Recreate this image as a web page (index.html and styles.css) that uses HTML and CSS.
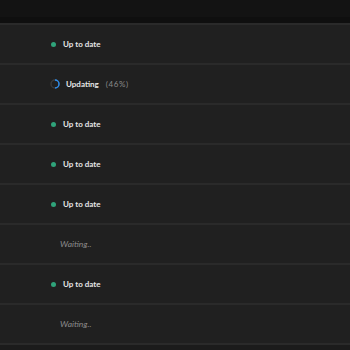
FILE: index.html
```html
<!DOCTYPE html>
<html lang="en">
<head>
  <meta charset="UTF-8" />
  <title>Apps</title>
  <link rel="stylesheet" href="styles.css">
</head>
<body>
  <div class="topbar"></div>

  <div class="list">
    <div class="row">
      <div class="status"><span class="dot"></span><span class="label">Up to date</span></div>
    </div>
    <div class="row">
      <div class="status">
        <svg class="spinner" width="10" height="10" viewBox="0 0 10 10">
          <circle cx="5" cy="5" r="4" fill="none" stroke="#3a3a3a" stroke-width="1.5" />
          <path d="M5 1 A4 4 0 0 1 5 9" fill="none" stroke="#2d8ceb" stroke-width="1.5" />
        </svg>
        <span class="label">Updating</span><span class="pct">(46%)</span>
      </div>
    </div>
    <div class="row">
      <div class="status"><span class="dot"></span><span class="label">Up to date</span></div>
    </div>
    <div class="row">
      <div class="status"><span class="dot"></span><span class="label">Up to date</span></div>
    </div>
    <div class="row">
      <div class="status"><span class="dot"></span><span class="label">Up to date</span></div>
    </div>
    <div class="row">
      <div class="status waiting">Waiting..</div>
    </div>
    <div class="row">
      <div class="status"><span class="dot"></span><span class="label">Up to date</span></div>
    </div>
    <div class="row">
      <div class="status waiting">Waiting..</div>
    </div>
  </div>
</body>
</html>
```

FILE: styles.css
```css
body {
  margin: 0;
  background: #1b1b1b;
  font-family: Lato, 'Open Sans', sans-serif;
  color: #e6e6e6;
  height: 350px;
  overflow: hidden;
}
.topbar {
  height: 23px;
  background: linear-gradient(#131313 0, #131313 17px, #0f0f0f 17px, #0f0f0f 23px);
}
.row {
  height: 38px;
  border-top: 2px solid #2a2a2a;
  background: #202020;
  display: flex;
  align-items: center;
}
.list {
  border-bottom: 2px solid #2a2a2a;
}
.status {
  display: flex;
  align-items: center;
  margin-left: 50px;
  font-size: 8px;
  font-weight: 700;
}
.dot {
  width: 5px;
  height: 5px;
  border-radius: 50%;
  background: #2fa37a;
  margin: 0 7px 0 1px;
}
.spinner {
  margin-right: 6px;
}
.pct {
  margin-left: 7px;
  font-weight: 400;
  font-style: normal;
  letter-spacing: 0.6px;
  color: #8a8a8a;
}
.waiting {
  margin-left: 60px;
  font-size: 8.5px;
  font-weight: 400;
  font-style: italic;
  color: #8c8c8c;
}
```
